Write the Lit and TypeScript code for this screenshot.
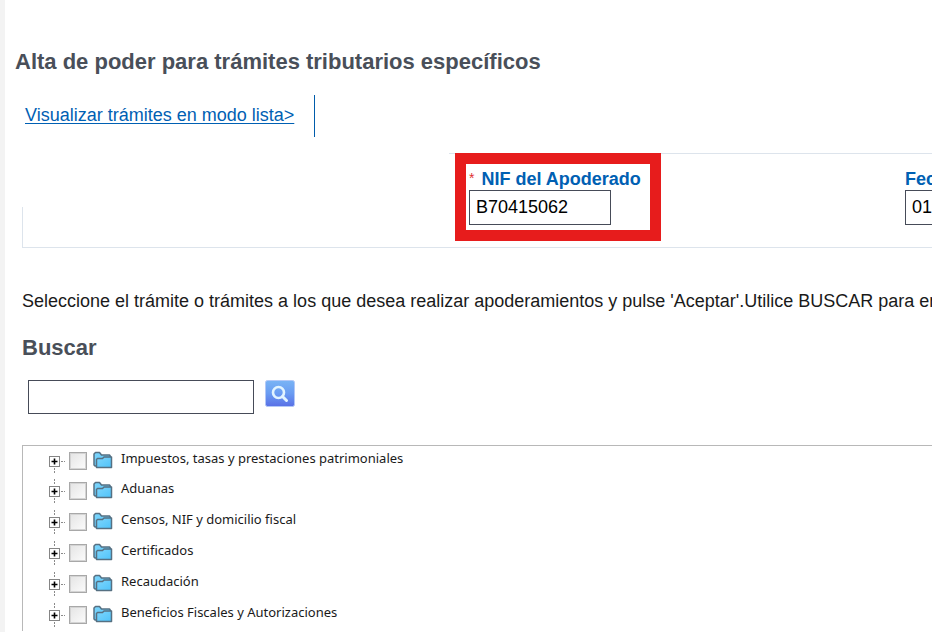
import { LitElement, html, css, svg } from "lit";
import { customElement } from "lit/decorators.js";

const branches = [
  "Impuestos, tasas y prestaciones patrimoniales",
  "Aduanas",
  "Censos, NIF y domicilio fiscal",
  "Certificados",
  "Recaudación",
  "Beneficios Fiscales y Autorizaciones",
];

const expander = (first: boolean) => html`<svg width="18" height="24" viewBox="0 0 18 24" aria-hidden="true">
  ${first ? "" : svg`<path d="M6.5 0v2M6.5 3v2" stroke="#8a8a8a" />`}
  <path d="M6.5 19v2M6.5 22v2M13 12.5h2M16 12.5h1" stroke="#8a8a8a" />
  <rect x="1.5" y="7.5" width="10" height="10" fill="#fff" stroke="#858585" />
  <path d="M3.5 12.5h6M6.5 9.5v6" stroke="#000" stroke-width="1.6" />
</svg>`;

const folder = html`<svg width="20" height="18" viewBox="0 0 20 18" aria-hidden="true">
  <defs>
    <linearGradient id="fill" x1="0" y1="0" x2="1" y2="1">
      <stop offset="0" stop-color="#7fd6fc" />
      <stop offset="1" stop-color="#4fc3fa" />
    </linearGradient>
  </defs>
  <path d="M1 14V3L2.500 1.500H6.500L8.500 4H16.500L17.500 5.500V15H2Z" fill="url(#fill)" stroke="#567082" stroke-width="1.500" stroke-linejoin="round" />
  <path d="M3.500 16.500V8.500L4.500 7.500H9.500L11 6H18.500V16.500Z" fill="url(#fill)" stroke="#567082" stroke-width="1.500" stroke-linejoin="round" />
</svg>`;

@customElement("app-root")
export class AppRoot extends LitElement {
  static styles = css`
    :host {
      display: block;
      height: 100vh;
      overflow: hidden;
      background: #fff;
      color: #1a1a1a;
      font: 18px/24px "Liberation Sans", Arial, sans-serif;
    }
    * { box-sizing: border-box; }
    .page {
      min-height: 100%;
      padding-top: 47px;
      border-left: 5px solid #f3f3f3;
    }
    h1, h2 {
      margin: 0;
      font-size: 22px;
      line-height: 30px;
      color: #494f59;
    }
    h1 { padding-left: 10px; white-space: nowrap; }
    .modes { display: flex; margin: 18px 0 16px 20px; }
    .modes a {
      padding: 8px 20px 10px 0;
      border-right: 1px solid #005cab;
      color: #0060b3;
      text-underline-offset: 2px;
    }
    .content { padding-left: 17px; }
    form { margin: 0; }
    .fields {
      display: grid;
      grid-template-columns: 427px minmax(0, 1fr);
      border-bottom: 1px solid #dde4ec;
    }
    .side { align-self: end; height: 40px; border-left: 1px solid #dde4ec; }
    .row {
      display: grid;
      grid-template-columns: 450px minmax(0, 1fr);
      height: 94px;
      padding-left: 6px;
      border-top: 1px solid #dde4ec;
    }
    .field { display: grid; justify-items: start; align-content: start; white-space: nowrap; }
    .field label { line-height: 22px; font-weight: bold; color: #0060b3; }
    .marked {
      justify-self: start;
      width: 206px;
      height: 88px;
      margin-top: -1px;
      padding: 4px 3px;
      border: 11px solid #e71c1c;
    }
    .plain { margin-top: 14px; }
    .star { margin-right: 2px; color: #e03131; font-weight: normal; font-size: 14px; line-height: 14px; vertical-align: 2px; }
    input[type="text"] {
      width: 142px;
      height: 35px;
      padding: 0 6px;
      border: 1px solid #464b58;
      background: #fff;
      font: inherit;
      color: #000;
    }
    p { margin: 41px 0 0; white-space: nowrap; }
    h2 { margin-top: 20px; }
    .search { display: flex; align-items: start; gap: 11px; margin: 17px 0 31px 6px; }
    .search input[type="text"] { width: 226px; height: 34px; }
    button { padding: 0; border: 0; background: none; display: grid; }
    .search svg { display: block; }
    .tree {
      margin: 0;
      padding: 0 0 0 25px;
      list-style: none;
      border: 1px solid #b8b8b8;
      border-width: 1px 0 0 1px;
    }
    .tree li { display: flex; height: 31px; padding-top: 3px; }
    .tree li:first-child { height: 30px; }
    .tree label {
      padding-left: 8px;
      font: 13px/18px "Noto Sans", Tahoma, sans-serif;
      color: #1a1a1a;
    }
    .tree input {
      appearance: none;
      width: 18px;
      height: 18px;
      margin: 3px 6px 0 3px;
      border: 1px solid #a8a8a8;
      box-shadow: inset 0 0 0 1px #d4d4d4;
      background: linear-gradient(135deg, #e4e4e4, #fcfcfc);
    }
    .tree button { width: 18px; height: 24px; }
    .folder { height: 18px; padding-top: 2px; }
    .folder svg { display: block; }
  `;

  render() {
    return html`<main class="page">
      <h1>Alta de poder para trámites tributarios específicos</h1>
      <nav class="modes"><a href="#lista">Visualizar trámites en modo lista&gt;</a></nav>
      <form class="content">
        <div class="fields">
          <div class="side"></div>
          <div class="row">
            <div class="field marked">
              <label for="nif"><span class="star">*</span> NIF del Apoderado</label>
              <input id="nif" type="text" value="B70415062" />
            </div>
            <div class="field plain">
              <label for="fecha">Fec</label>
              <input id="fecha" type="text" value="01" />
            </div>
          </div>
        </div>
        <p>Seleccione el trámite o trámites a los que desea realizar apoderamientos y pulse 'Aceptar'.Utilice BUSCAR para en</p>
        <h2 id="buscar">Buscar</h2>
        <div class="search">
          <input type="text" aria-labelledby="buscar" />
          <button type="button" aria-labelledby="buscar">
            <svg width="30" height="28" viewBox="0 0 30 28" aria-hidden="true">
              <defs>
                <linearGradient id="glass" x1="0" y1="0" x2="0" y2="1">
                  <stop offset="0" stop-color="#79b4f5" />
                  <stop offset="0.5" stop-color="#6a9cf2" />
                  <stop offset="1" stop-color="#5970e6" />
                </linearGradient>
              </defs>
              <rect x="0.500" y="0.500" width="29" height="26" rx="2" fill="url(#glass)" stroke="#b3c8f7" />
              <circle cx="13.500" cy="12.500" r="5.500" fill="none" stroke="#e2f4ff" stroke-width="2.600" />
              <path d="M17.500 16.500L21.500 20.500" stroke="#e2f4ff" stroke-width="3" stroke-linecap="round" />
            </svg>
          </button>
        </div>
        <ul class="tree">
          ${branches.map(
            (name, i) => html`<li>
              <button type="button" aria-expanded="false" aria-labelledby="name${i}">${expander(i === 0)}</button>
              <input type="checkbox" id="branch${i}" />
              <span class="folder">${folder}</span>
              <label id="name${i}" for="branch${i}">${name}</label>
            </li>`
          )}
        </ul>
      </form>
    </main>`;
  }
}
